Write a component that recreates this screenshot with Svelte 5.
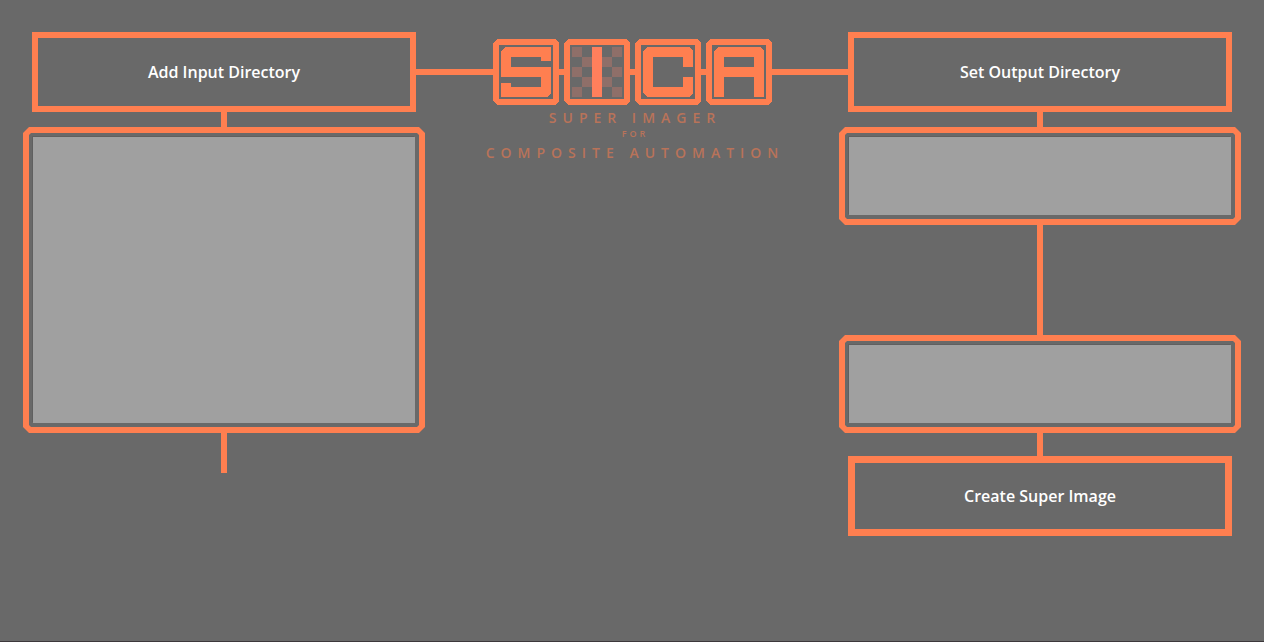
<script>
  const checks = [];
  for (let row = 0; row < 5; row++) {
    for (let col = 0; col < 5; col++) {
      if ((row + col) % 2 === 0 && col !== 2) checks.push({ x: 8 + col * 10, y: 8 + row * 10 });
    }
  }
  const frame = 'M4 0H62L66 4V62L62 66H4L0 62V4ZM6 6V60H60V6Z';
  let inputs = $state('');
  let output = $state('');
  let status = $state('');
</script>

<main>
  <header>
    <button type="button">Add Input Directory</button>
    <div class="brand">
      <span class="wire"></span>
      <svg class="logo" width="279" height="66" viewBox="0 0 279 66" role="img" aria-label="SICA" shape-rendering="crispEdges">
        <g fill="#ff7f50" fill-rule="evenodd">
          <path d="M66 30H71V36H66ZM137 30H142V36H137ZM208 30H213V36H208Z" />
          <g>
            <path d={frame} />
            <path d="M12 8H58V22H48V18H18V28H58V54L54 58H8V44H18V48H48V38H8V12Z" />
          </g>
          <g transform="translate(71 0)">
            <path d={frame} />
            {#each checks as c}
              <rect x={c.x} y={c.y} width="10" height="10" fill="#8f6f69" />
            {/each}
            <rect x="28" y="8" width="10" height="50" fill="#ff7f5c" />
          </g>
          <g transform="translate(142 0)">
            <path d={frame} />
            <path d="M12 8H54L58 12V28H48V18H18V48H48V38H58V54L54 58H12L8 54V12Z" />
          </g>
          <g transform="translate(213 0)">
            <path d={frame} />
            <path d="M12 8H54L58 12V58H48V38H18V58H8V12ZM18 18V28H48V18Z" />
          </g>
        </g>
      </svg>
      <span class="wire"></span>
    </div>
    <button type="button">Set Output Directory</button>
  </header>

  <div class="body">
    <section>
      <span class="link short"></span>
      <div class="frame"><div class="inset"><textarea class="tall" readonly aria-label="Input directories" bind:value={inputs}></textarea></div></div>
      <span class="link tail"></span>
    </section>

    <p class="tagline">
      <span>SUPER IMAGER</span>
      <small>FOR</small>
      <span>COMPOSITE AUTOMATION</span>
    </p>

    <section>
      <span class="link short"></span>
      <div class="frame"><div class="inset"><textarea readonly aria-label="Output directory" bind:value={output}></textarea></div></div>
      <span class="link long"></span>
      <div class="frame"><div class="inset"><textarea readonly aria-label="Status" bind:value={status}></textarea></div></div>
      <span class="link mid"></span>
      <button class="create" type="button">Create Super Image</button>
    </section>
  </div>
</main>

<style>
  :global(body) {
    margin: 0;
    background: #696969;
  }
  main {
    --coral: #ff7f50;
    --gray: #696969;
    box-sizing: border-box;
    min-height: 100vh;
    padding: 32px 23px;
    border-bottom: 1px solid #3c383b;
    background: var(--gray);
    font-family: "Open Sans", "Noto Sans", sans-serif;
  }
  header {
    display: grid;
    grid-template-columns: 384fr 432fr 384fr;
    padding: 0 9px;
  }
  button {
    box-sizing: border-box;
    height: 80px;
    margin: 0;
    padding: 0;
    border: 6px solid var(--coral);
    border-radius: 0;
    background: var(--gray);
    color: #fff;
    font: 600 16px/24px "Open Sans", "Noto Sans", sans-serif;
    cursor: pointer;
  }
  .brand {
    display: flex;
    align-items: center;
  }
  .logo {
    flex: none;
  }
  .wire {
    flex: 1;
    height: 6px;
    background: var(--coral);
  }
  .body {
    display: grid;
    grid-template-columns: 402fr 414fr 402fr;
    align-items: start;
  }
  section {
    display: flex;
    flex-direction: column;
  }
  .link {
    align-self: center;
    width: 6px;
    background: var(--coral);
  }
  .short {
    height: 15px;
  }
  .mid {
    height: 23px;
  }
  .tail {
    height: 40px;
  }
  .long {
    height: 110px;
  }
  .frame {
    --cut: 6px;
    padding: 6px;
    background: var(--coral);
  }
  .inset {
    --cut: 2px;
    padding: 4px;
    background: var(--gray);
  }
  .frame,
  .inset {
    clip-path: polygon(
      var(--cut) 0, calc(100% - var(--cut)) 0, 100% var(--cut), 100% calc(100% - var(--cut)),
      calc(100% - var(--cut)) 100%, var(--cut) 100%, 0 calc(100% - var(--cut)), 0 var(--cut)
    );
  }
  textarea {
    display: block;
    box-sizing: border-box;
    width: 100%;
    height: 78px;
    margin: 0;
    padding: 4px;
    border: 0;
    border-radius: 0;
    outline: 0;
    resize: none;
    background: #a0a0a0;
    box-shadow: -1px -1px #606060;
    color: #fff;
    font: 14px/20px "Open Sans", "Noto Sans", sans-serif;
  }
  .tall {
    height: 286px;
  }
  .create {
    margin: 0 9px;
    border-width: 7px;
  }
  .tagline {
    display: flex;
    flex-direction: column;
    align-items: center;
    margin: 0;
    padding-left: 6px;
    color: #b97359;
    font-size: 14px;
    font-weight: 600;
    line-height: 12px;
    letter-spacing: 6px;
    white-space: nowrap;
  }
  .tagline small {
    padding: 4px 0 7px;
    font-size: 9px;
    letter-spacing: 3px;
  }
</style>
